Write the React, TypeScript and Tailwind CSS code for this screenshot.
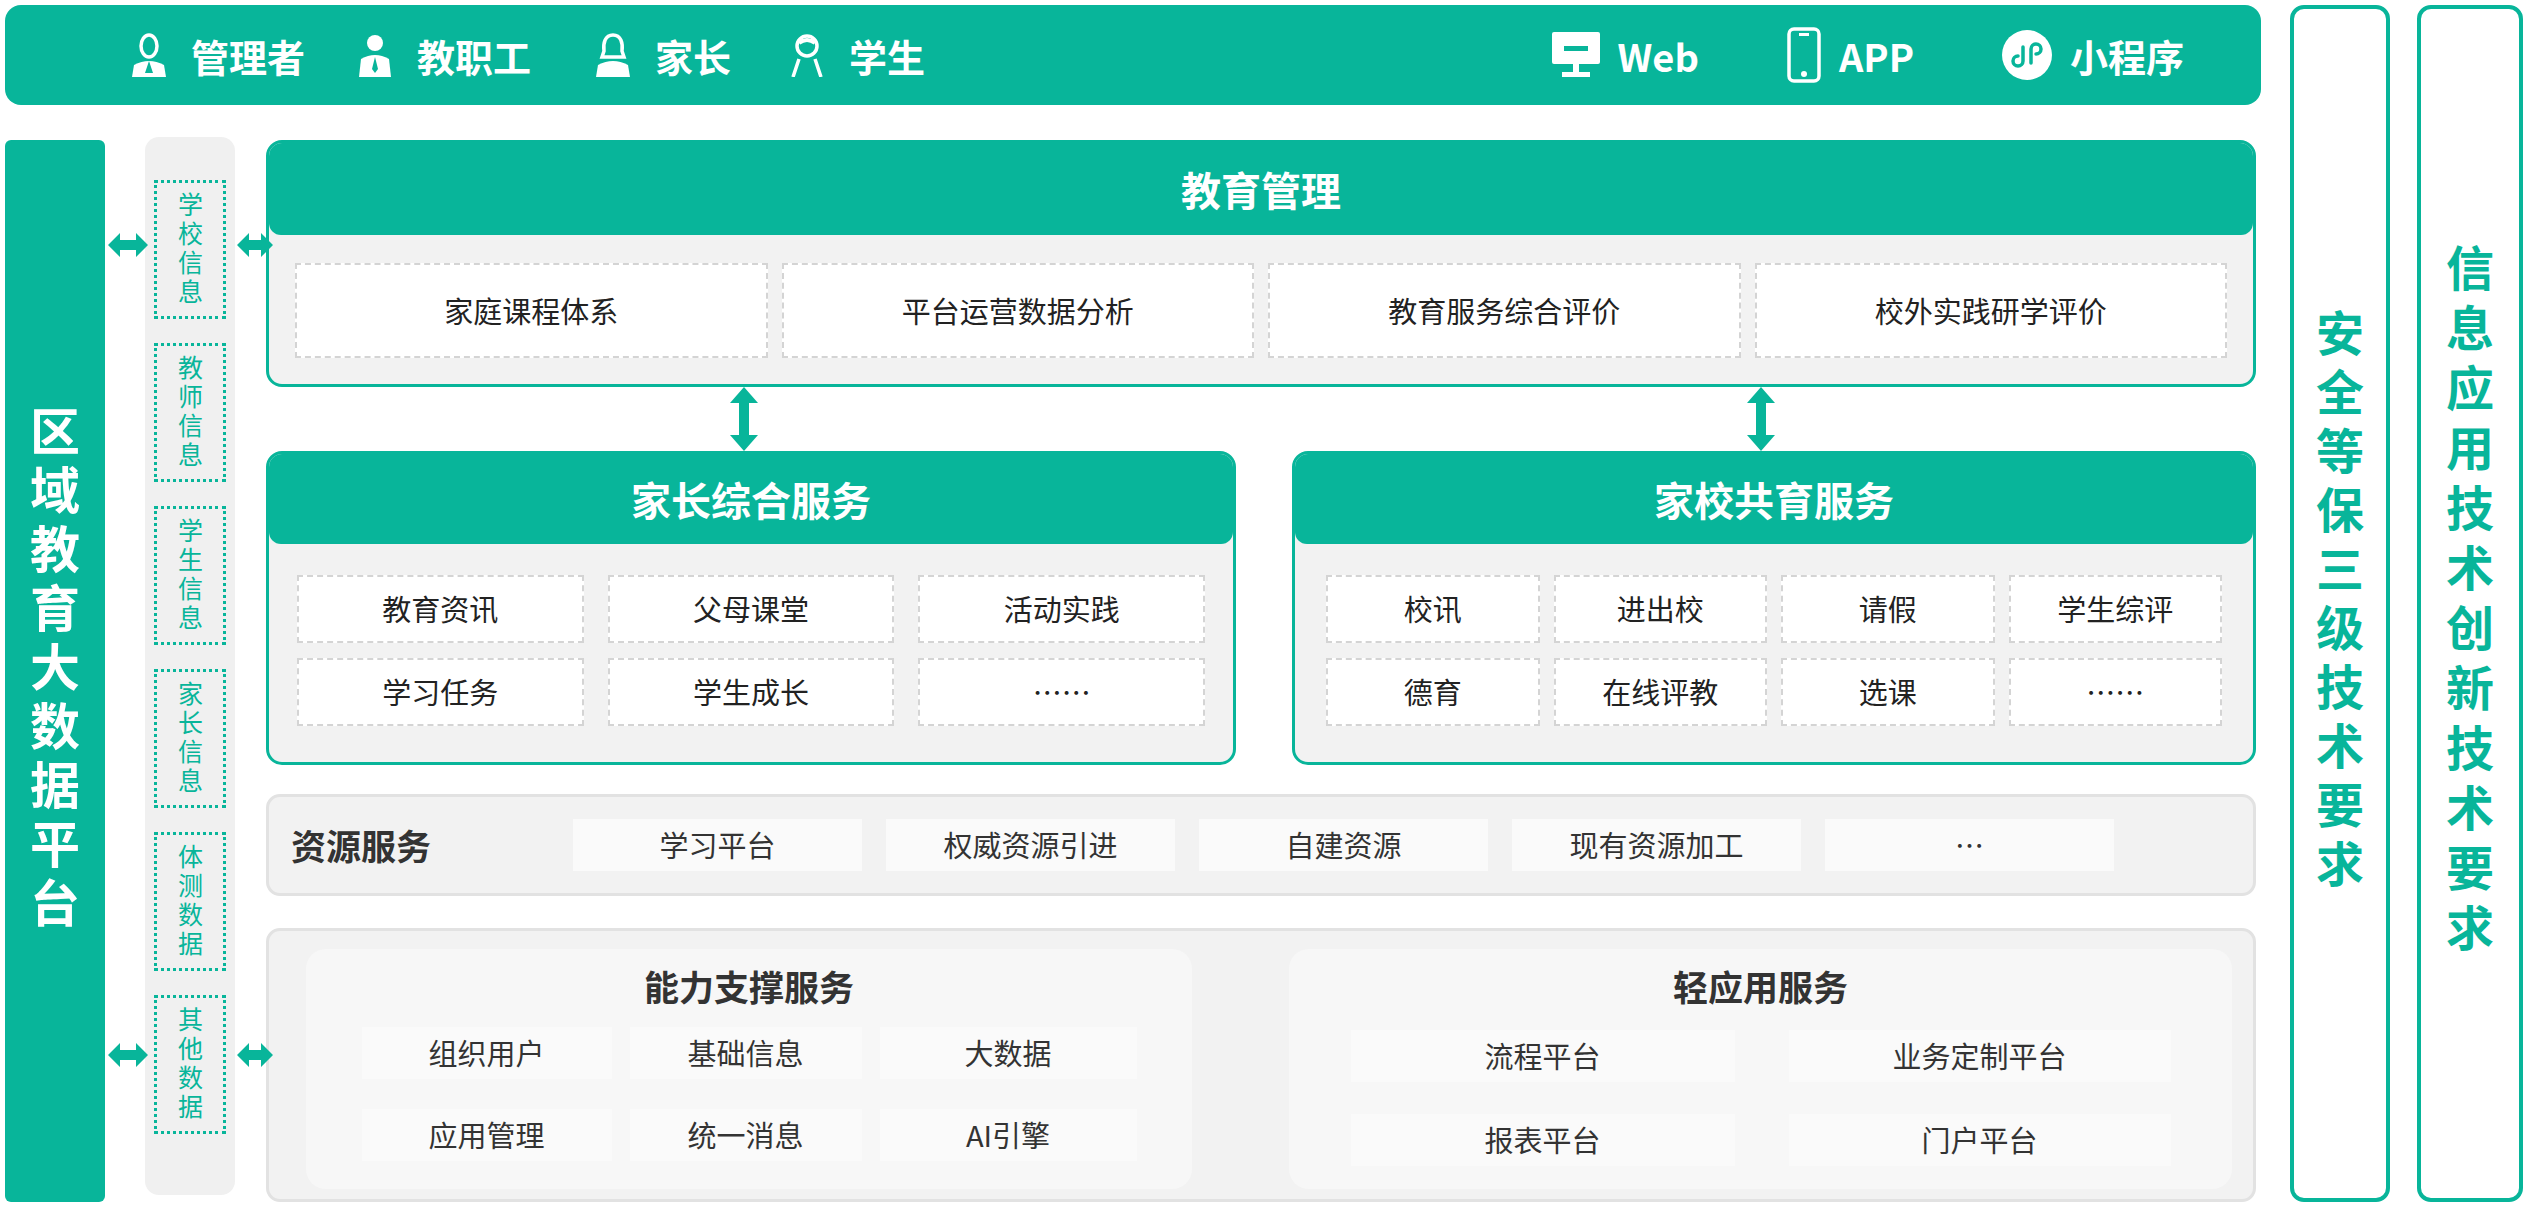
import React from "react";

const G = "#08b59a";

function VText({ text, className }: { text: string; className: string }) {
  return <div className={"[writing-mode:vertical-rl] [text-orientation:upright] " + className}>{text}</div>;
}

function HArrow({ w }: { w: number }) {
  return (
    <svg width={w} height="26" viewBox={`0 0 ${w} 26`}>
      <polygon points={`0,13 12,1 12,8 ${w - 12},8 ${w - 12},1 ${w},13 ${w - 12},25 ${w - 12},18 12,18 12,25`} fill={G} />
    </svg>
  );
}
function VArrow() {
  return (
    <svg width="30" height="64" viewBox="0 0 30 64">
      <polygon points="15,0 29,16 20,16 20,48 29,48 15,64 1,48 10,48 10,16 1,16" fill={G} />
    </svg>
  );
}

const Dash = ({ t, cls }: { t: string; cls: string }) => (
  <div className={"bg-white border-2 border-dashed border-[#d4d4d4] flex items-center justify-center text-[29px] text-[#222] " + cls}>{t}</div>
);
const Plain = ({ t, cls }: { t: string; cls: string }) => (
  <div className={"bg-[#fafafa] flex items-center justify-center text-[29px] text-[#333] " + cls}>{t}</div>
);

function Person({ kind }: { kind: number }) {
  return (
    <svg width="40" height="44" viewBox="0 0 40 44" fill="white">
      {kind === 3 ? (
        <>
          <circle cx="20" cy="13" r="10" fill="none" stroke="white" strokeWidth="3.5" />
          <path d="M12 10 Q20 4 28 10" stroke="white" strokeWidth="4" fill="none" />
          <path d="M6 44 L12 26 M34 44 L28 26" stroke="white" strokeWidth="3.5" fill="none" />
        </>
      ) : kind === 2 ? (
        <>
          <path d="M20 2 C12 2 10 10 11 18 L9 24 L31 24 L29 18 C30 10 28 2 20 2 Z" fill="none" stroke="white" strokeWidth="3.5" />
          <path d="M3 44 L5 32 Q20 24 35 32 L37 44 Z" />
        </>
      ) : kind === 1 ? (
        <>
          <circle cx="20" cy="10" r="8" />
          <path d="M4 44 L6 26 Q20 18 34 26 L36 44 Z" />
          <path d="M20 24 L17 36 L20 40 L23 36 Z" fill={G} />
        </>
      ) : (
        <>
          <ellipse cx="20" cy="13" rx="8" ry="11" fill="none" stroke="white" strokeWidth="3.5" />
          <path d="M3 44 L5 32 Q20 24 35 32 L37 44 Z" />
          <path d="M20 28 L16 40 L24 40 Z" fill={G} />
        </>
      )}
    </svg>
  );
}

export default function App() {
  const font = { fontFamily: '"Noto Sans CJK SC", "Noto Sans", sans-serif' };
  return (
    <div className="w-[2527px] h-[1208px] bg-white flex gap-[29px] pl-[5px] pt-[5px]" style={font}>
      <div className="w-[2256px] flex flex-col">
        <div className="h-[100px] rounded-[16px] bg-[#08b59a] flex items-center text-white text-[38px] font-bold">
          <div className="flex items-center gap-[22px] ml-[124px]"><Person kind={0} />管理者</div>
          <div className="flex items-center gap-[22px] ml-[50px]"><Person kind={1} />教职工</div>
          <div className="flex items-center gap-[22px] ml-[62px]"><Person kind={2} />家长</div>
          <div className="flex items-center gap-[22px] ml-[56px]"><Person kind={3} />学生</div>
          <div className="flex items-center gap-[18px] ml-auto">
            <svg width="48" height="46" viewBox="0 0 48 46"><rect x="0" y="0" width="48" height="32" rx="2" fill="white" /><rect x="12" y="14" width="24" height="5" fill={G} /><rect x="21" y="32" width="6" height="8" fill="white" /><rect x="10" y="40" width="28" height="5" fill="white" /></svg>
            Web
          </div>
          <div className="flex items-center gap-[18px] ml-[88px]">
            <svg width="34" height="56" viewBox="0 0 34 56"><rect x="2" y="2" width="30" height="52" rx="5" fill="none" stroke="white" strokeWidth="3.5" /><rect x="12" y="6" width="10" height="3" fill="white" /><circle cx="17" cy="47" r="3" fill="white" /></svg>
            APP
          </div>
          <div className="flex items-center gap-[18px] ml-[88px] mr-[77px]">
            <svg width="50" height="50" viewBox="0 0 50 50"><circle cx="25" cy="25" r="25" fill="white" /><path d="M21 17 v14 a5 5 0 1 1 -5 -5 M29 33 v-14 a5 5 0 1 1 5 5" stroke={G} strokeWidth="3.5" fill="none" strokeLinecap="round" /></svg>
            小程序
          </div>
        </div>

        <div className="relative mt-[32px] h-[1065px] flex">
          <div className="w-[100px] mt-[3px] h-[1062px] rounded-[6px] bg-[#08b59a] flex items-center justify-center">
            <VText text="区域教育大数据平台" className="text-white text-[50px] font-bold tracking-[9px] leading-[50px]" />
          </div>
          <div className="ml-[40px] w-[90px] h-[1058px] rounded-[14px] bg-[#f0f0f0] flex flex-col items-center pt-[43px] gap-[24px]">
            {["学校信息", "教师信息", "学生信息", "家长信息", "体测数据", "其他数据"].map((t) => (
              <div key={t} className="w-[72px] h-[139px] border-[3px] border-dotted border-[#08b59a] flex items-center justify-center">
                <VText text={t} className="text-[#08b59a] text-[25px] tracking-[4px] leading-[25px]" />
              </div>
            ))}
          </div>
          <div className="absolute left-[103px] top-[95px]"><HArrow w={40} /></div>
          <div className="absolute left-[232px] top-[95px]"><HArrow w={36} /></div>
          <div className="absolute left-[103px] top-[905px]"><HArrow w={40} /></div>
          <div className="absolute left-[232px] top-[905px]"><HArrow w={36} /></div>

          <div className="ml-[31px] w-[1990px] flex flex-col">
            <div className="mt-[3px] h-[247px] rounded-[16px] border-[3px] border-[#08b59a] bg-[#f2f2f2] overflow-hidden flex flex-col">
              <div className="h-[92px] bg-[#08b59a] rounded-b-[12px] flex items-center justify-center text-white text-[40px] font-bold">教育管理</div>
              <div className="flex gap-[14px] px-[26px] mt-[28px]">
                {["家庭课程体系", "平台运营数据分析", "教育服务综合评价", "校外实践研学评价"].map((t) => (
                  <Dash key={t} t={t} cls="flex-1 h-[95px]" />
                ))}
              </div>
            </div>
            <div className="h-[64px] flex">
              <div className="ml-[463px]"><VArrow /></div>
              <div className="ml-[987px]"><VArrow /></div>
            </div>
            <div className="h-[314px] flex gap-[56px]">
              <div className="w-[970px] rounded-[16px] border-[3px] border-[#08b59a] bg-[#f2f2f2] overflow-hidden">
                <div className="h-[90px] bg-[#08b59a] rounded-b-[12px] flex items-center justify-center text-white text-[40px] font-bold">家长综合服务</div>
                <div className="grid grid-cols-3 gap-x-[24px] gap-y-[15px] px-[28px] mt-[31px]">
                  {["教育资讯", "父母课堂", "活动实践", "学习任务", "学生成长", "……"].map((t) => (
                    <Dash key={t} t={t} cls="h-[68px]" />
                  ))}
                </div>
              </div>
              <div className="w-[964px] rounded-[16px] border-[3px] border-[#08b59a] bg-[#f2f2f2] overflow-hidden">
                <div className="h-[90px] bg-[#08b59a] rounded-b-[12px] flex items-center justify-center text-white text-[40px] font-bold">家校共育服务</div>
                <div className="grid grid-cols-4 gap-x-[14px] gap-y-[15px] px-[31px] mt-[31px]">
                  {["校讯", "进出校", "请假", "学生综评", "德育", "在线评教", "选课", "……"].map((t) => (
                    <Dash key={t} t={t} cls="h-[68px]" />
                  ))}
                </div>
              </div>
            </div>
            <div className="mt-[29px] h-[102px] rounded-[14px] border-[3px] border-[#e2e2e2] bg-[#f2f2f2] flex items-center">
              <div className="ml-[22px] w-[282px] text-[35px] font-bold text-[#333]">资源服务</div>
              <div className="flex gap-[24px]">
                {["学习平台", "权威资源引进", "自建资源", "现有资源加工", "…"].map((t) => (
                  <Plain key={t} t={t} cls="w-[289px] h-[52px]" />
                ))}
              </div>
            </div>
            <div className="mt-[32px] h-[274px] rounded-[14px] border-[3px] border-[#e2e2e2] bg-[#f2f2f2] flex gap-[97px] pl-[37px] pt-[18px]">
              <div className="w-[886px] h-[240px] rounded-[20px] bg-[#f7f7f7] flex flex-col items-center">
                <div className="mt-[14px] text-[35px] font-bold text-[#333] leading-[46px]">能力支撑服务</div>
                <div className="grid grid-cols-[250px_232px_257px] gap-x-[18px] gap-y-[30px] mt-[18px]">
                  {["组织用户", "基础信息", "大数据", "应用管理", "统一消息", "AI引擎"].map((t) => (
                    <Plain key={t} t={t} cls="h-[52px]" />
                  ))}
                </div>
              </div>
              <div className="w-[943px] h-[240px] rounded-[20px] bg-[#f7f7f7] flex flex-col items-center">
                <div className="mt-[14px] text-[35px] font-bold text-[#333] leading-[46px]">轻应用服务</div>
                <div className="grid grid-cols-[384px_382px] gap-x-[54px] gap-y-[32px] mt-[21px]">
                  {["流程平台", "业务定制平台", "报表平台", "门户平台"].map((t) => (
                    <Plain key={t} t={t} cls="h-[52px]" />
                  ))}
                </div>
              </div>
            </div>
          </div>
        </div>
      </div>
      <div className="w-[100px] h-[1197px] rounded-[14px] border-[4px] border-[#08b59a] flex items-center justify-center">
        <VText text="安全等保三级技术要求" className="text-[#08b59a] text-[48px] font-bold tracking-[11px] leading-[48px]" />
      </div>
      <div className="ml-[-2px] w-[106px] h-[1197px] rounded-[14px] border-[4px] border-[#08b59a] flex items-center justify-center">
        <VText text="信息应用技术创新技术要求" className="text-[#08b59a] text-[48px] font-bold tracking-[12px] leading-[48px]" />
      </div>
    </div>
  );
}
